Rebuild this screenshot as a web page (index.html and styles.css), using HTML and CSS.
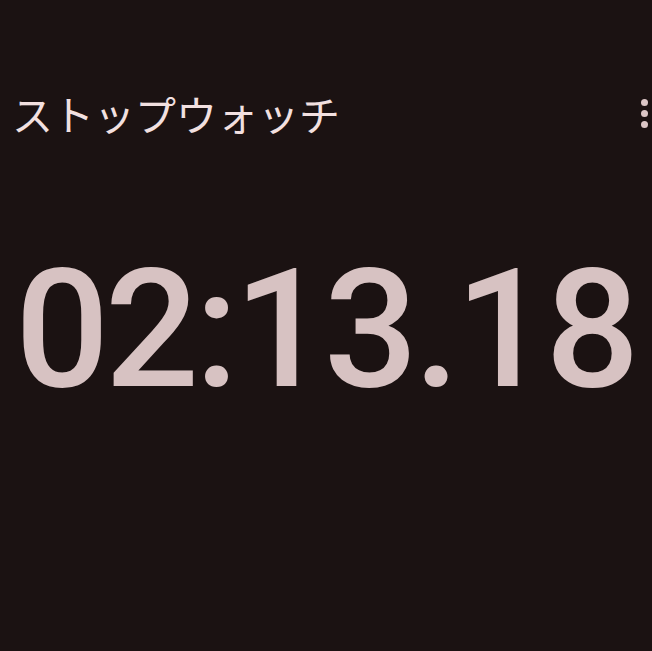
FILE: index.html
```html
<!DOCTYPE html>
<html lang="ja">
<head>
<meta charset="utf-8">
<link rel="stylesheet" href="styles.css">
</head>
<body>
<div class="app">
  <header class="bar">
    <h1 class="title">ストップウォッチ</h1>
    <div class="menu" aria-label="menu">
      <span class="dot"></span><span class="dot"></span><span class="dot"></span>
    </div>
  </header>
  <main class="clock">
    <div class="time">02:13.18</div>
  </main>
</div>
</body>
</html>
```

FILE: styles.css
```css
html, body {
  margin: 0;
  padding: 0;
  background: #1b1212;
}
.app {
  width: 652px;
  height: 651px;
  overflow: hidden;
  background: #1b1212;
}
.bar {
  display: flex;
  justify-content: space-between;
  align-items: center;
  padding: 92px 0 0 12px;
  height: 42px;
}
.title {
  margin: 0;
  font-family: "Noto Sans CJK JP", sans-serif;
  font-weight: 400;
  font-size: 41px;
  line-height: 42px;
  color: #f2e0e0;
}
.menu {
  display: flex;
  flex-direction: column;
  gap: 4px;
  margin-right: 4px;
}
.dot {
  width: 7px;
  height: 7px;
  border-radius: 50%;
  background: #dcc6c6;
}
.clock {
  padding-top: 113px;
  padding-left: 15px;
}
.time {
  font-family: Roboto, sans-serif;
  font-weight: 500;
  font-size: 166px;
  line-height: 166px;
  letter-spacing: -4.5px;
  white-space: nowrap;
  color: #d7c2c2;
}
```
